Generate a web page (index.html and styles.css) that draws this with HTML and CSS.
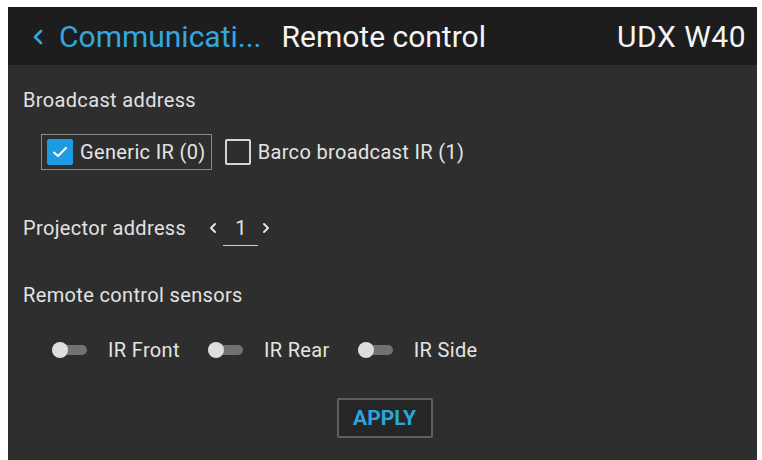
FILE: index.html
```html
<!DOCTYPE html>
<html>
<head>
<meta charset="utf-8">
<link rel="stylesheet" href="styles.css">
</head>
<body>
<div class="panel">
  <header class="topbar">
    <div class="crumb">
      <svg class="chev" width="12" height="16" viewBox="0 0 12 16"><path d="M9 2 L3 8 L9 14" fill="none" stroke="#36a6dc" stroke-width="2.6" stroke-linecap="round" stroke-linejoin="round"/></svg>
      <span class="crumb-text">Communicati...</span>
    </div>
    <div class="title">Remote control</div>
    <div class="model">UDX W40</div>
  </header>
  <main class="content">
    <div class="label first">Broadcast address</div>
    <div class="check-row">
      <label class="check focused">
        <span class="box on">
          <svg width="16" height="12" viewBox="0 0 16 12"><path d="M2 6.5 L6 10 L14 2" fill="none" stroke="#fff" stroke-width="2" stroke-linecap="round" stroke-linejoin="round"/></svg>
        </span>
        <span>Generic IR (0)</span>
      </label>
      <label class="check">
        <span class="box"></span>
        <span>Barco broadcast IR (1)</span>
      </label>
    </div>
    <div class="addr-row">
      <span class="label">Projector address</span>
      <div class="stepper">
        <svg width="8" height="12" viewBox="0 0 8 12"><path d="M6 2 L2 6 L6 10" fill="none" stroke="#e6e6e6" stroke-width="2" stroke-linecap="round" stroke-linejoin="round"/></svg>
        <span class="value">1</span>
        <svg width="8" height="12" viewBox="0 0 8 12"><path d="M2 2 L6 6 L2 10" fill="none" stroke="#e6e6e6" stroke-width="2" stroke-linecap="round" stroke-linejoin="round"/></svg>
      </div>
    </div>
    <div class="label sensors">Remote control sensors</div>
    <div class="toggle-row">
      <div class="toggle"><span class="track"><span class="knob"></span></span><span>IR Front</span></div>
      <div class="toggle"><span class="track"><span class="knob"></span></span><span>IR Rear</span></div>
      <div class="toggle"><span class="track"><span class="knob"></span></span><span>IR Side</span></div>
    </div>
    <div class="actions">
      <button class="apply">APPLY</button>
    </div>
  </main>
</div>
</body>
</html>
```
FILE: styles.css
```css
html, body {
  margin: 0;
  padding: 0;
  background: #ffffff;
}

body {
  font-family: Roboto, "Liberation Sans", sans-serif;
  color: #e4e4e4;
}

.panel {
  margin: 7px 5px 0 8px;
  height: 453px;
  background: #2e2e2e;
  display: flex;
  flex-direction: column;
}

.topbar {
  height: 58px;
  flex: none;
  background: #1d1d1d;
  display: flex;
  align-items: center;
  padding: 0 11px 0 24px;
  font-size: 30px;
}

.crumb {
  display: flex;
  align-items: center;
  gap: 15px;
  color: #36a6dc;
}

.chev {
  margin-top: 1px;
}

.title {
  margin-left: 20px;
  color: #f4f4f4;
}

.model {
  margin-left: auto;
  color: #f4f4f4;
  letter-spacing: 0.5px;
}

.content {
  display: flex;
  flex-direction: column;
  padding: 0 15px;
  font-size: 20px;
  line-height: 24px;
  letter-spacing: 0.35px;
}

.label {
  color: #e2e2e2;
}

.first {
  margin-top: 23px;
}

.check-row {
  margin-top: 22px;
  margin-left: 18px;
  display: flex;
  align-items: center;
  gap: 12px;
}

.check {
  display: flex;
  align-items: center;
  gap: 7px;
  height: 36px;
  padding: 0 5px 0 5px;
  border: 1px solid transparent;
  box-sizing: border-box;
}

.check + .check {
  padding-left: 0;
}

.check.focused {
  border-color: #8a8a8a;
}

.box {
  width: 26px;
  height: 26px;
  box-sizing: border-box;
  border: 2px solid #d6d6d6;
  border-radius: 2px;
  display: flex;
  align-items: center;
  justify-content: center;
}

.box.on {
  background: #1e9be0;
  border-color: #1e9be0;
}

.addr-row {
  margin-top: 45px;
  display: flex;
  align-items: center;
  gap: 23px;
  height: 26px;
}

.stepper {
  display: flex;
  align-items: center;
  gap: 18px;
}

.value {
  position: relative;
  width: 9px;
  text-align: center;
}

.value::after {
  content: "";
  position: absolute;
  left: -12px;
  right: -14px;
  bottom: -6px;
  height: 1px;
  background: #cfcfcf;
}

.sensors {
  margin-top: 42px;
}

.toggle-row {
  margin-top: 31px;
  margin-left: 29px;
  display: flex;
  align-items: center;
  gap: 28px;
}

.toggle {
  display: flex;
  align-items: center;
  gap: 21px;
}

.track {
  position: relative;
  width: 35px;
  height: 10px;
  border-radius: 5px;
  background: #727272;
}

.knob {
  position: absolute;
  left: 0;
  top: -3px;
  width: 16px;
  height: 16px;
  border-radius: 50%;
  background: #dedede;
}

.actions {
  margin-top: 36px;
  display: flex;
  justify-content: center;
  padding-left: 4px;
}

.apply {
  width: 96px;
  height: 40px;
  background: #262626;
  border: 2px solid #5e5e5e;
  border-radius: 2px;
  color: #2ba6dd;
  font-family: Roboto, "Liberation Sans", sans-serif;
  font-weight: 700;
  font-size: 21px;
  padding: 0;
}
```
